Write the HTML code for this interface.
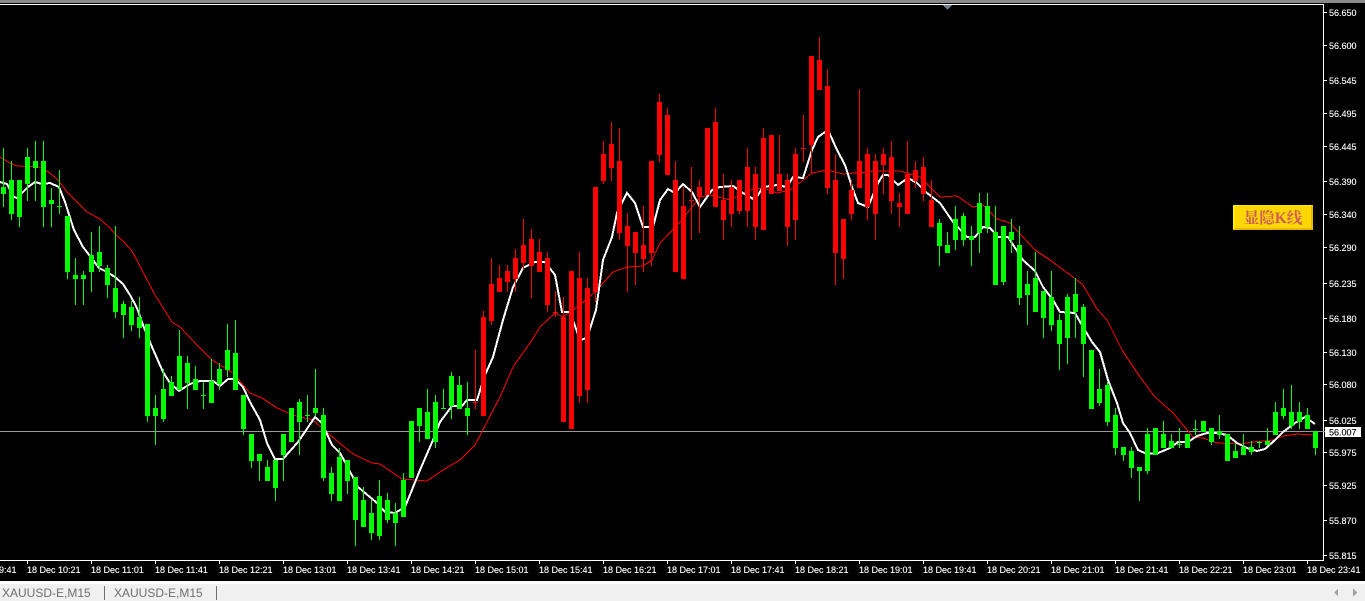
<!DOCTYPE html>
<html lang="zh"><head><meta charset="utf-8"><title>XAUUSD-E,M15</title>
<style>
html,body{margin:0;padding:0;background:#000;width:1365px;height:601px;overflow:hidden}
svg{position:absolute;left:0;top:0}
polyline,path,rect{shape-rendering:crispEdges}
.t{font:9px "Liberation Sans",sans-serif;fill:#fff;stroke:#fff;stroke-width:.12}
.tab{font:12px "Liberation Sans",sans-serif;fill:#6e6e6e}
#btn{position:absolute;left:1233px;top:205px;width:80px;height:25px;box-sizing:border-box;background:#ffd700;border-style:solid;border-width:1px 2px 2px 2px;border-color:#ffee00 #e6b800 #e6b800 #ffee00;color:#cd5c5c;font:bold 15.500px/25px "Liberation Serif","Noto Serif CJK SC",serif;text-align:center;white-space:nowrap}
</style></head><body>
<svg width="1365" height="601" viewBox="0 0 1365 601" xmlns="http://www.w3.org/2000/svg">
<rect width="1365" height="601" fill="#000"/>
<rect width="1365" height="3" fill="#8a8a8a"/>
<rect x="0" y="4" width="1324" height="1" fill="#fff"/>
<path d="M943 5h9l-4.500 5z" fill="#708090"/>
<rect x="0" y="431" width="1324" height="1" fill="#9a9a9a"/>
<polyline fill="none" stroke="#f00" stroke-width="1" points="0,157 10,163 17,166 40,167 50,173 58,180 67,192 80,205 87,212 100,219 110,228 115,234 123,241 132,251 143,272 155,295 172,322 180,327 197,345 212,360 233,373 250,393 262,398 277,408 293,415 313,420 330,435 353,454 372,463 380,464 402,479 427,481 443,470 460,460 475,445 487,422 500,397 513,367 532,340 540,327 555,313 563,317 580,305 595,292 613,272 627,267 643,266 652,260 660,243 680,222 700,197 710,195 730,200 750,190 763,188 777,193 790,190 797,185 812,173 827,170 843,174 880,171 900,171 920,177 940,197 957,196 973,207 983,205 997,219 1010,223 1035,250 1050,260 1073,277 1083,285 1097,309 1107,320 1122,350 1140,377 1155,397 1173,413 1193,437 1203,438 1217,443 1240,444 1253,442 1273,440 1283,436 1297,434 1313,435"/>
<polyline fill="none" stroke="#fff" stroke-width="2" points="0,182 7,184 14,197 17,198 28,187 35,182 42,184 50,183 59,187 65,202 74,230 83,247 90,256 99,268 107,272 115,277 123,284 130,295 137,308 143,325 152,347 163,372 170,383 179,391 190,384 200,381 213,381 220,386 228,379 235,379 243,387 250,402 260,420 267,443 275,459 283,459 298,442 315,417 322,423 332,445 340,453 345,462 358,487 377,503 385,512 395,513 405,507 420,470 433,440 440,422 452,406 462,406 467,400 477,400 485,375 493,357 503,320 513,287 523,268 535,262 545,262 555,275 562,312 570,312 580,340 587,338 596,310 603,260 612,237 617,213 627,193 635,203 643,227 653,227 660,200 668,189 675,193 683,184 692,192 700,207 712,190 720,187 733,186 743,193 755,200 763,187 777,185 787,187 793,177 803,178 812,150 818,137 828,130 837,150 845,165 852,187 858,203 868,207 878,183 883,175 888,175 898,185 908,178 917,183 927,193 940,203 953,222 967,237 975,237 983,227 990,228 998,237 1008,237 1023,260 1035,271 1043,287 1053,300 1060,312 1075,313 1083,327 1092,342 1100,352 1108,380 1117,403 1123,423 1130,433 1138,450 1147,454 1158,453 1170,448 1178,442 1188,442 1197,436 1207,433 1217,433 1227,435 1237,443 1247,448 1257,451 1265,449 1275,440 1283,432 1295,423 1305,417 1315,424"/>
<path fill="none" stroke="#0f0" stroke-width="1" d="M3.500 148V207M11.500 161V220M19.500 180V227M27.500 148V201M35.500 141V201M43.500 141V227M51.500 188V227M59.500 170V214M67.500 216V279M75.500 258V305M83.500 271V305M91.500 232V292M99.500 226V272M107.500 265V298M115.500 226V318M123.500 301V338M131.500 301V331M139.500 297V338M147.500 324V422M155.500 395V445M163.500 369V422M171.500 376V396M179.500 330V390M187.500 356V409M195.500 366V390M203.500 382V409M211.500 359V403M219.500 363V390M227.500 324V377M235.500 320V390M243.500 395V435M251.500 434V468M259.500 454V481M267.500 460V481M275.500 460V501M283.500 434V481M291.500 408V442M299.500 399V455M307.500 395V422M315.500 369V416M323.500 408V481M331.500 467V501M339.500 448V501M347.500 460V494M355.500 477V546M363.500 487V527M371.500 500V540M379.500 480V540M387.500 493V523M395.500 503V546M403.500 473V517M411.500 421V478M419.500 408V442M427.500 389V439M435.500 395V448M443.500 389V409M451.500 372V419M459.500 376V409M467.500 382V435M939.500 219V266M947.500 232V253M955.500 206V250M963.500 213V246M971.500 226V266M979.500 193V253M987.500 193V233M995.500 206V285M1003.500 226V285M1011.500 219V253M1019.500 226V305M1027.500 271V325M1035.500 252V312M1043.500 291V338M1051.500 271V331M1059.500 314V370M1067.500 294V364M1075.500 278V338M1083.500 304V377M1091.500 350V409M1099.500 369V406M1107.500 382V426M1115.500 408V455M1123.500 447V461M1131.500 447V478M1139.500 467V501M1147.500 428V474M1155.500 428V455M1163.500 421V448M1171.500 434V448M1179.500 428V448M1187.500 434V448M1195.500 420V435M1203.500 421V432M1211.500 428V445M1219.500 415V439M1227.500 434V461M1235.500 443V458M1243.500 434V455M1251.500 441V455M1259.500 441V448M1267.500 428V445M1275.500 402V435M1283.500 389V419M1291.500 385V429M1299.500 402V429M1307.500 408V429M1315.500 431V455"/>
<path fill="none" stroke="#0f0" stroke-width="5" d="M3.500 187V194M11.500 180V214M19.500 180V217M27.500 157V184M35.500 161V168M43.500 161V207M51.500 200V204M59.500 206V207M67.500 216V272M75.500 275V279M83.500 275V279M91.500 255V272M99.500 252V266M107.500 268V285M115.500 288V312M123.500 304V315M131.500 307V325M139.500 317V328M147.500 324V416M155.500 408V416M163.500 389V419M171.500 382V396M179.500 356V390M187.500 363V383M195.500 379V390M203.500 395V396M211.500 381V403M219.500 369V384M227.500 350V370M235.500 353V390M243.500 395V429M251.500 434V461M259.500 454V461M267.500 467V481M275.500 460V488M283.500 434V455M291.500 408V442M299.500 402V422M307.500 415V416M315.500 408V413M323.500 415V478M331.500 473V494M339.500 457V501M347.500 460V481M355.500 477V520M363.500 500V527M371.500 513V533M379.500 496V536M387.500 500V520M395.500 513V523M403.500 480V517M411.500 421V478M419.500 408V426M427.500 412V439M435.500 402V442M443.500 408V409M451.500 376V406M459.500 385V409M467.500 408V416M939.500 223V246M947.500 245V253M955.500 219V240M963.500 216V240M971.500 236V240M979.500 203V233M987.500 206V227M995.500 232V285M1003.500 226V282M1011.500 232V240M1019.500 245V298M1027.500 284V295M1035.500 278V312M1043.500 291V318M1051.500 297V325M1059.500 320V344M1067.500 297V338M1075.500 294V312M1083.500 307V344M1091.500 350V409M1099.500 389V403M1107.500 385V422M1115.500 415V448M1123.500 447V455M1131.500 451V468M1139.500 467V471M1147.500 434V471M1155.500 428V455M1163.500 434V448M1171.500 441V448M1179.500 444V445M1187.500 434V448M1195.500 429V430M1203.500 421V432M1211.500 428V442M1219.500 431V435M1227.500 434V461M1235.500 451V458M1243.500 447V455M1251.500 447V452M1259.500 442V443M1267.500 441V445M1275.500 412V435M1283.500 408V416M1291.500 412V426M1299.500 412V422M1307.500 415V429M1315.500 431V448"/>
<path fill="none" stroke="#f00" stroke-width="1" d="M475.500 350V409M483.500 311V416M491.500 258V325M499.500 265V292M507.500 265V292M515.500 249V292M523.500 219V270M531.500 229V298M539.500 239V272M547.500 252V312M555.500 291V317M563.500 297V422M571.500 271V429M579.500 252V403M587.500 278V403M595.500 187V302M603.500 141V184M611.500 122V181M619.500 128V240M627.500 213V292M635.500 232V285M643.500 206V272M651.500 161V266M659.500 94V162M667.500 108V175M675.500 161V272M683.500 187V279M691.500 167V240M699.500 180V233M707.500 128V195M715.500 108V207M723.500 174V240M731.500 180V227M739.500 180V214M747.500 148V227M755.500 167V240M763.500 128V230M771.500 135V194M779.500 135V191M787.500 174V246M795.500 148V240M803.500 115V162M811.500 56V174M819.500 37V90M827.500 69V194M835.500 154V285M843.500 219V279M851.500 180V220M859.500 89V188M867.500 148V220M875.500 154V240M883.500 148V194M891.500 141V214M899.500 193V227M907.500 141V214M915.500 161V188M923.500 157V201M931.500 180V227"/>
<path fill="none" stroke="#f00" stroke-width="5" d="M475.500 402V403M483.500 317V416M491.500 284V321M499.500 278V292M507.500 271V282M515.500 258V279M523.500 245V263M531.500 239V266M539.500 252V272M547.500 258V305M555.500 312V313M563.500 317V422M571.500 271V429M579.500 278V396M587.500 288V390M595.500 187V292M603.500 154V181M611.500 144V168M619.500 161V233M627.500 226V246M635.500 232V253M643.500 245V259M651.500 161V253M659.500 102V155M667.500 115V175M675.500 180V272M683.500 206V279M691.500 200V201M699.500 187V197M707.500 128V195M715.500 122V207M723.500 200V220M731.500 187V214M739.500 180V211M747.500 167V211M755.500 174V227M763.500 138V230M771.500 135V194M779.500 174V191M787.500 180V227M795.500 154V220M803.500 148V149M811.500 56V145M819.500 60V90M827.500 86V188M835.500 180V253M843.500 219V259M851.500 190V214M859.500 161V188M867.500 154V207M875.500 161V214M883.500 154V165M891.500 157V201M899.500 203V207M907.500 174V214M915.500 170V181M923.500 167V194M931.500 200V227"/>
<rect x="1323" y="4" width="1" height="557" fill="#fff"/>
<rect x="0" y="560" width="1324" height="1" fill="#fff"/>
<path stroke="#fff" stroke-width="1" d="M1324 12.500h3M1324 45.500h3M1324 80.500h3M1324 113.500h3M1324 146.500h3M1324 181.500h3M1324 214.500h3M1324 247.500h3M1324 283.500h3M1324 318.500h3M1324 352.500h3M1324 384.500h3M1324 420.500h3M1324 452.500h3M1324 485.500h3M1324 520.500h3M1324 555.500h3M27.500 561v3M91.500 561v3M155.500 561v3M219.500 561v3M283.500 561v3M347.500 561v3M411.500 561v3M475.500 561v3M539.500 561v3M603.500 561v3M667.500 561v3M731.500 561v3M795.500 561v3M859.500 561v3M923.500 561v3M987.500 561v3M1051.500 561v3M1115.500 561v3M1179.500 561v3M1243.500 561v3M1307.500 561v3"/>
<g>
<text class="t" x="1329" y="16">56.650</text>
<text class="t" x="1329" y="49">56.600</text>
<text class="t" x="1329" y="84">56.545</text>
<text class="t" x="1329" y="117">56.495</text>
<text class="t" x="1329" y="150">56.445</text>
<text class="t" x="1329" y="185">56.390</text>
<text class="t" x="1329" y="218">56.340</text>
<text class="t" x="1329" y="251">56.290</text>
<text class="t" x="1329" y="287">56.235</text>
<text class="t" x="1329" y="322">56.180</text>
<text class="t" x="1329" y="356">56.130</text>
<text class="t" x="1329" y="388">56.080</text>
<text class="t" x="1329" y="424">56.025</text>
<text class="t" x="1329" y="456">55.975</text>
<text class="t" x="1329" y="489">55.925</text>
<text class="t" x="1329" y="524">55.870</text>
<text class="t" x="1329" y="559">55.815</text>
<text class="t" x="-37" y="573">18 Dec 09:41</text>
<text class="t" x="27" y="573">18 Dec 10:21</text>
<text class="t" x="91" y="573">18 Dec 11:01</text>
<text class="t" x="155" y="573">18 Dec 11:41</text>
<text class="t" x="219" y="573">18 Dec 12:21</text>
<text class="t" x="283" y="573">18 Dec 13:01</text>
<text class="t" x="347" y="573">18 Dec 13:41</text>
<text class="t" x="411" y="573">18 Dec 14:21</text>
<text class="t" x="475" y="573">18 Dec 15:01</text>
<text class="t" x="539" y="573">18 Dec 15:41</text>
<text class="t" x="603" y="573">18 Dec 16:21</text>
<text class="t" x="667" y="573">18 Dec 17:01</text>
<text class="t" x="731" y="573">18 Dec 17:41</text>
<text class="t" x="795" y="573">18 Dec 18:21</text>
<text class="t" x="859" y="573">18 Dec 19:01</text>
<text class="t" x="923" y="573">18 Dec 19:41</text>
<text class="t" x="987" y="573">18 Dec 20:21</text>
<text class="t" x="1051" y="573">18 Dec 21:01</text>
<text class="t" x="1115" y="573">18 Dec 21:41</text>
<text class="t" x="1179" y="573">18 Dec 22:21</text>
<text class="t" x="1243" y="573">18 Dec 23:01</text>
<text class="t" x="1307" y="573">18 Dec 23:41</text>
</g>
<rect x="1323" y="431" width="3" height="1" fill="#9a9a9a"/>
<rect x="1325" y="427" width="36" height="10" fill="#fff"/>
<text x="1329" y="435.500" style="font:9px 'Liberation Sans',sans-serif;fill:#000;stroke:#000;stroke-width:.12">56.007</text>
<rect x="0" y="581" width="1365" height="3" fill="#fff"/>
<rect x="0" y="584" width="1365" height="17" fill="#f0f0f0"/>
<text class="tab" x="2" y="597">XAUUSD-E,M15</text>
<text class="tab" x="114" y="597">XAUUSD-E,M15</text>
<rect x="104" y="586" width="1" height="14" fill="#707070"/>
<rect x="216" y="586" width="1" height="14" fill="#707070"/>
<path d="M1334 592.500l4-4v8zM1357 592.500l-4-4v8z" fill="#a0a0a0"/>
</svg>
<div id="btn">显隐K线</div>
</body></html>
